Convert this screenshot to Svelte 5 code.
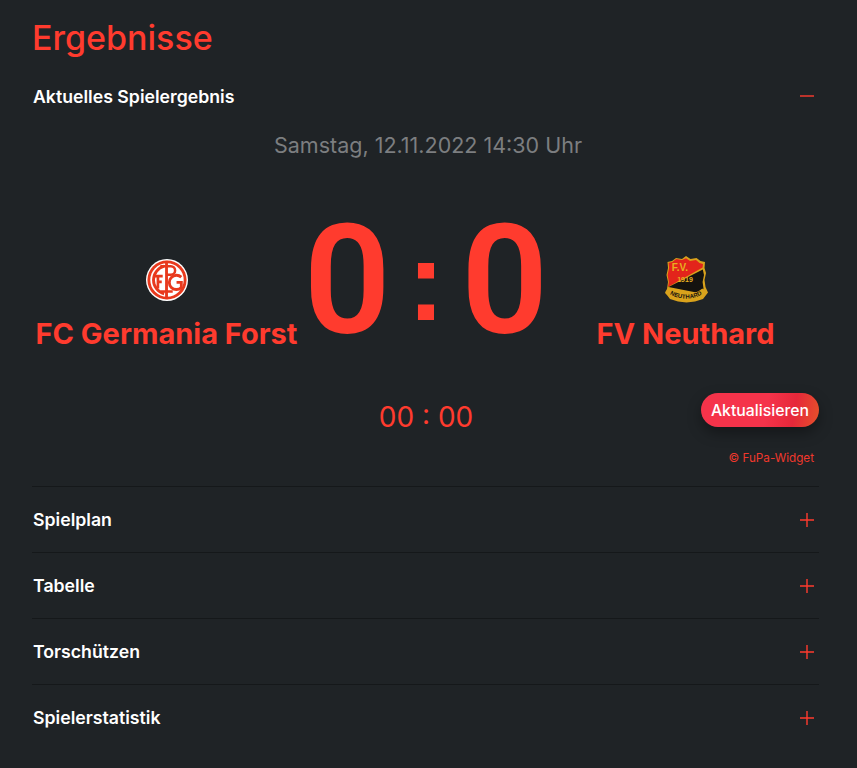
<script>
  const rows = ["Spielplan", "Tabelle", "Torschützen", "Spielerstatistik"];
</script>

<main class="page">
  <h1>Ergebnisse</h1>

  <section class="open">
    <div class="head">
      <span>Aktuelles Spielergebnis</span>
      <svg class="toggle" viewBox="0 0 14 14"><path d="M0 7h14" /></svg>
    </div>

    <p class="date">Samstag, 12.11.2022 14:30 Uhr</p>

    <div class="score">
      <div class="team">
        <svg class="logo" viewBox="0 0 44 44">
          <circle cx="22" cy="22" r="22" fill="#fff" />
          <circle cx="22" cy="22" r="20.500" fill="#e8391d" />
          <circle cx="22" cy="22" r="17.500" fill="#fff" />
          <g fill="none" stroke="#e8391d">
            <path stroke-width="3" d="M19 7.500a15 15 0 0 0 0 29" />
            <path stroke-width="2.800" d="M12.500 18v13M9 18h8.500M12.500 24h4" />
            <path stroke-width="3" d="M21.500 2v40" />
            <path stroke-width="2.600" d="M15 7.500h11a4.500 4.500 0 0 1 0 9h-4.500M15 34h13" />
            <path stroke-width="3" d="M37 19a7.500 7.500 0 1 0 0 11v-5.500h-5" />
          </g>
        </svg>
        <span class="name">FC Germania Forst</span>
      </div>
      <div class="result"><span>0</span><span class="colon">:</span><span>0</span></div>
      <div class="team">
        <svg class="logo crest" viewBox="0 0 44 48">
          <path fill="#d9a21c" d="M22 0l4.500 3 6-1 4 3 4.500 1-.5 6 1.500 5-1.500 7 1 7 2.500 5.500-5 6.500-8 2.500-8.500 1-8.500-1-8-2.500-5-6.500L3 33l1-7-1.500-7L4 12l-.5-6L8 5l4-3 6 1z" />
          <path fill="#e3241b" d="M22 2.200l4 2.800 6-1 3.500 3 3.500.9-.4 3.600L4 31l.9-5-1.300-7 1.500-7-.5-5.200 3.900-.8 3.700-3 5.800 1z" />
          <path fill="#14120f" d="M38.800 13.500l1.200 5.500-1.400 7 .9 6.500-2 5-33-6.500L4.500 31z" />
          <text x="16" y="15" class="fv">F.V.</text>
          <text x="21" y="26" class="year">1919</text>
          <path fill="none" stroke="#d9a21c" stroke-width="6.500" d="M3.500 35c10 8.500 27 8.500 37 0" />
          <path id="arc" fill="none" d="M4 37c10 7.500 26 7.500 36 0" />
          <text class="club"><textPath href="#arc" startOffset="50%" text-anchor="middle">NEUTHARD</textPath></text>
        </svg>
        <span class="name">FV Neuthard</span>
      </div>
    </div>

    <div class="timer-row">
      <span class="timer">00 : 00</span>
      <button class="refresh">Aktualisieren</button>
    </div>
    <div class="credit">© FuPa-Widget</div>
  </section>

  {#each rows as row}
    <div class="head row">
      <span>{row}</span>
      <svg class="toggle" viewBox="0 0 14 14"><path d="M0 7h14M7 0v14" /></svg>
    </div>
  {/each}
</main>

<style>
  :global(body) {
    background: #1f2326;
  }

  .page {
    box-sizing: border-box;
    height: 768px;
    padding: 16px 38px 0 33px;
    font-family: Inter, "Noto Sans", sans-serif;
    color: #fff;
    overflow: hidden;
  }

  h1 {
    margin: 0 0 0 -1px;
    font-size: 34px;
    line-height: 44px;
    font-weight: 500;
    color: #ff3b2e;
  }

  .head {
    display: flex;
    justify-content: space-between;
    align-items: center;
    height: 66px;
    padding-right: 5px;
    font-size: 17.700px;
    font-weight: 600;
  }

  .open .head {
    height: 30px;
    margin-top: 21px;
  }

  .open {
    padding-bottom: 19px;
  }

  .row {
    margin-left: -1px;
    padding-left: 1px;
    border-top: 1px solid #15181a;
    box-sizing: border-box;
  }

  .toggle {
    width: 14px;
    height: 14px;
    fill: none;
    stroke: #ff3b2e;
    stroke-width: 1.400;
  }

  .date {
    margin: 19px 0 0;
    padding-left: 4px;
    text-align: center;
    font-size: 21.500px;
    line-height: 30px;
    color: #7c7e80;
  }

  .score {
    display: grid;
    grid-template-columns: 267px minmax(0, 1fr) 267px;
    align-items: end;
    height: 170px;
    margin-top: 36px;
    color: #ff3b2e;
  }

  .team {
    display: flex;
    flex-direction: column;
    align-items: center;
    gap: 15px;
    padding-bottom: 14px;
  }

  .name {
    font-size: 29px;
    line-height: 36px;
    font-weight: 700;
    white-space: nowrap;
  }

  .logo {
    width: 42px;
    height: 42px;
  }

  .crest {
    width: 44px;
    height: 48px;
    margin-bottom: -3px;
  }

  .result {
    display: flex;
    justify-content: center;
    align-items: center;
    gap: 16px;
    height: 170px;
    font-family: Roboto, sans-serif;
    font-size: 153px;
    font-weight: 600;
    line-height: 170px;
  }

  .colon {
    font-family: "Liberation Sans", sans-serif;
    font-weight: 700;
    font-size: 114px;
  }

  .timer-row {
    position: relative;
    display: flex;
    justify-content: center;
    margin-top: 29px;
  }

  .timer {
    font-size: 28px;
    line-height: 44px;
    color: #ff3b2e;
    font-weight: 400;
  }

  .refresh {
    position: absolute;
    right: 0;
    top: -2px;
    height: 34px;
    width: 118px;
    padding: 0;
    border: 0;
    border-radius: 17px;
    background: linear-gradient(100deg, #f5334a 0%, #f5334a 55%, #e6283a 78%, #e6522a 100%);
    box-shadow: 0 6px 14px rgba(0, 0, 0, 0.35);
    color: #fff;
    font: 500 15.800px Inter, sans-serif;
  }

  .credit {
    margin-top: 10px;
    padding-right: 5px;
    text-align: right;
    font-size: 11.700px;
    line-height: 18px;
    color: #f0382c;
  }

  .fv {
    font: 700 10px "Liberation Sans", sans-serif;
    fill: #e8b020;
    text-anchor: middle;
  }

  .year {
    font: 700 7px "Liberation Sans", sans-serif;
    fill: #e8b020;
    text-anchor: middle;
  }

  .club {
    font: 700 6px "Liberation Sans", sans-serif;
    fill: #14120f;
  }
</style>
